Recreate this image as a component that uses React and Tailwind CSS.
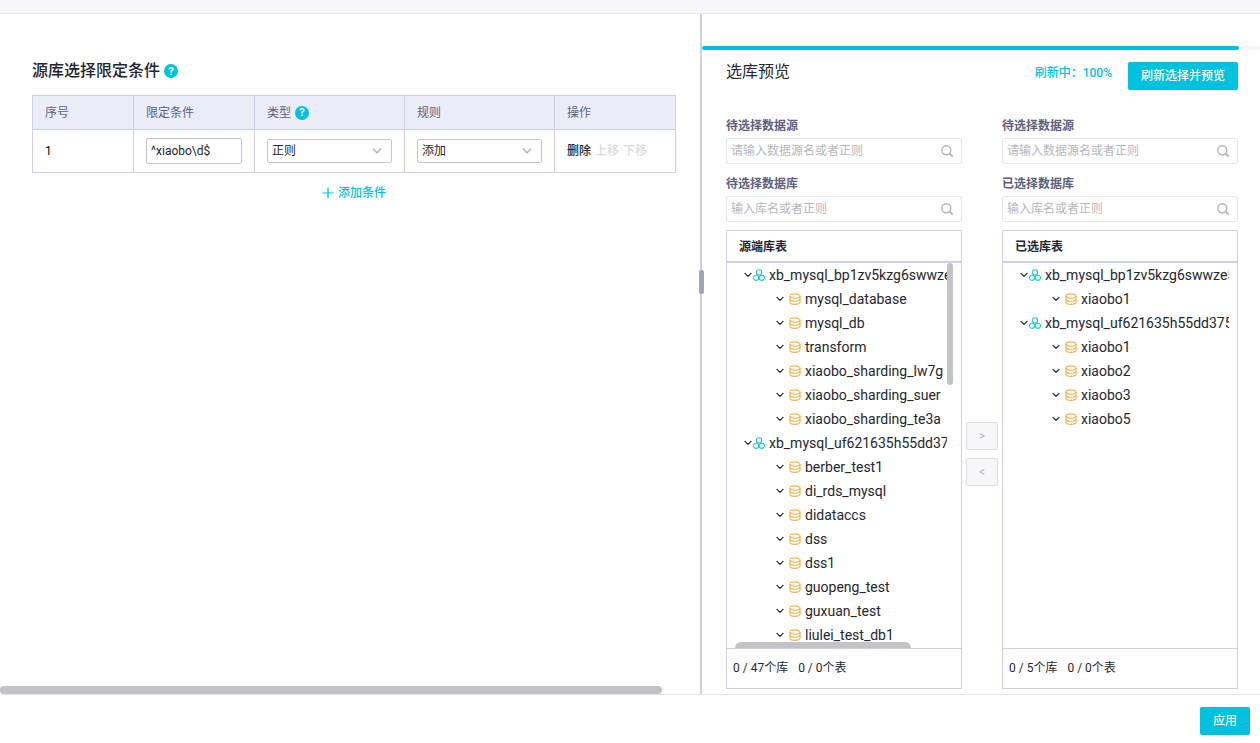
import React from "react";

const sourceTree = [
  {
    name: "xb_mysql_bp1zv5kzg6swwze5",
    children: [
      "mysql_database",
      "mysql_db",
      "transform",
      "xiaobo_sharding_lw7g",
      "xiaobo_sharding_suer",
      "xiaobo_sharding_te3a",
    ],
  },
  {
    name: "xb_mysql_uf621635h55dd3758",
    children: [
      "berber_test1",
      "di_rds_mysql",
      "didataccs",
      "dss",
      "dss1",
      "guopeng_test",
      "guxuan_test",
      "liulei_test_db1",
    ],
  },
];

const selectedTree = [
  { name: "xb_mysql_bp1zv5kzg6swwze5", children: ["xiaobo1"] },
  {
    name: "xb_mysql_uf621635h55dd375",
    children: ["xiaobo1", "xiaobo2", "xiaobo3", "xiaobo5"],
  },
];

function Chevron({ className }) {
  return (
    <svg
      viewBox="0 0 8 8"
      fill="none"
      stroke="currentColor"
      strokeLinecap="round"
      strokeLinejoin="round"
      className={className}
      aria-hidden="true"
    >
      <path d="M1 2.4 L4 5.4 L7 2.4" strokeWidth="1.3" />
    </svg>
  );
}

function HelpButton() {
  return (
    <button
      type="button"
      aria-label="帮助"
      className="flex size-3.5 shrink-0 items-center justify-center rounded-full bg-[#00c1de] text-[11px] leading-none font-bold text-white"
    >
      ?
    </button>
  );
}

function SourceIcon() {
  return (
    <svg viewBox="0 0 12 12" fill="none" stroke="#1fc8e3" strokeWidth="1.1" className="size-3 shrink-0" aria-hidden="true">
      <circle cx="6" cy="3.4" r="2.6" />
      <circle cx="3.1" cy="8.8" r="2.6" />
      <circle cx="8.9" cy="8.8" r="2.6" />
    </svg>
  );
}

function DatabaseIcon() {
  return (
    <svg viewBox="0 0 12 12" fill="none" stroke="#fbb03f" strokeWidth="1.1" className="size-3 shrink-0" aria-hidden="true">
      <ellipse cx="6" cy="3" rx="5" ry="2.1" />
      <path d="M1 3 V9.3 C1 10.5 3.2 11.4 6 11.4 S11 10.5 11 9.3 V3" />
      <path d="M1 6.2 C1 7.3 3.2 8.2 6 8.2 S11 7.3 11 6.2" />
    </svg>
  );
}

function SearchField({ id, label, placeholder }) {
  return (
    <div className="mb-2">
      <label htmlFor={id} className="block h-6 text-xs leading-6 font-bold text-[#5c607c]">
        {label}
      </label>
      <div className="flex h-[26px] items-center rounded-xs border border-[#e6e7eb] bg-white pr-2 pl-1">
        <input
          id={id}
          type="text"
          placeholder={placeholder}
          className="min-w-0 flex-1 bg-transparent text-xs text-[#24262e] outline-none placeholder:text-[#b5b6ba]"
        />
        <button type="button" aria-label="搜索" className="text-[#b3b4b8]">
          <svg viewBox="0 0 12 12" fill="none" stroke="currentColor" strokeWidth="1.4" className="size-3" aria-hidden="true">
            <circle cx="5.3" cy="5.3" r="4.5" />
            <path d="M8.8 8.8 L11.2 11" strokeLinecap="round" strokeWidth="1.8" />
          </svg>
        </button>
      </div>
    </div>
  );
}

function Tree({ nodes }) {
  return (
    <ul className="overflow-hidden text-sm leading-6 whitespace-nowrap text-[#24262e]">
      {nodes.map((node) => (
        <li key={node.name}>
          <div className="flex h-6 items-center pl-[9px]">
            <button type="button" aria-label="展开或收起" className="mr-px shrink-0">
              <Chevron className="size-2" />
            </button>
            <SourceIcon />
            <span className="pl-1">{node.name}</span>
          </div>
          <ul>
            {node.children.map((child) => (
              <li key={child} className="flex h-6 items-center pl-[41px]">
                <button type="button" aria-label="展开或收起" className="mr-[5px] shrink-0">
                  <Chevron className="size-2" />
                </button>
                <DatabaseIcon />
                <span className="pl-1">{child}</span>
              </li>
            ))}
          </ul>
        </li>
      ))}
    </ul>
  );
}

function TreePanel({ title, nodes, databases, tables, scrollbars }) {
  return (
    <section className="flex flex-1 flex-col border border-[#ccd1e6]">
      <h3 className="h-8 border-b-2 border-[#ccd1e6] px-3 text-xs leading-8 font-bold text-[#24262e]">
        {title}
      </h3>
      <div className="relative flex-1 px-2 pb-px">
        <div className={scrollbars ? "pr-1.5" : ""}>
          <Tree nodes={nodes} />
        </div>
        {scrollbars && (
          <>
            <div className="absolute top-0 right-2 h-[122px] w-1.5 rounded-full bg-[#c2c3c7]" />
            <div className="absolute bottom-0 left-2 h-1.5 w-44 rounded-t-md bg-[#c2c3c7]" />
          </>
        )}
      </div>
      <footer className="h-10 border-t border-[#ccd1e6] px-1.5 text-xs leading-[38px] text-[#24262e]">
        <span className="mr-2.5">{databases}</span>
        <span>{tables}</span>
      </footer>
    </section>
  );
}

function SelectBox({ label, options }) {
  return (
    <div className="relative">
      <select
        aria-label={label}
        className="block h-6 w-full appearance-none rounded-xs border border-[#c4c6cc] bg-white px-1 text-xs text-[#24262e] outline-none"
      >
        {options.map((option) => (
          <option key={option}>{option}</option>
        ))}
      </select>
      <Chevron className="pointer-events-none absolute top-[7px] right-2.5 size-2.5 text-[#b3b4b8]" />
    </div>
  );
}

function ConditionPane() {
  const head = "border border-[#ccd1e6] px-3 font-normal";
  const cell = "border border-[#ccd1e6] px-3";
  return (
    <div className="flex min-w-0 flex-[700] flex-col">
      <div className="flex-1 pt-[45px] pr-6 pl-8">
        <div className="flex h-9 items-start gap-1">
          <h2 className="text-base leading-6 font-medium text-[#24262e]">源库选择限定条件</h2>
          <div className="flex h-6 items-center">
            <HelpButton />
          </div>
        </div>
        <table className="w-full table-fixed border-collapse text-left text-xs">
          <colgroup>
            <col className="w-[101px]" />
            <col className="w-[121px]" />
            <col className="w-[150px]" />
            <col className="w-[150px]" />
            <col />
          </colgroup>
          <thead>
            <tr className="h-[34px] bg-[#ebedf6] text-[#5c607c]">
              <th className={head}>序号</th>
              <th className={head}>限定条件</th>
              <th className={head}>
                <div className="flex items-center gap-1">
                  类型
                  <HelpButton />
                </div>
              </th>
              <th className={head}>规则</th>
              <th className={head}>操作</th>
            </tr>
          </thead>
          <tbody>
            <tr className="h-[43px]">
              <td className={cell}>1</td>
              <td className={cell}>
                <input
                  aria-label="限定条件"
                  defaultValue="^xiaobo\d$"
                  className="block h-[26px] w-full rounded-xs border border-[#c4c6cc] px-1 text-xs text-[#24262e] outline-none"
                />
              </td>
              <td className={cell}>
                <SelectBox label="类型" options={["正则"]} />
              </td>
              <td className={cell}>
                <SelectBox label="规则" options={["添加"]} />
              </td>
              <td className={cell}>
                <div className="flex gap-1 font-medium whitespace-nowrap">
                  <button type="button" className="text-[#24262e]">删除</button>
                  <button type="button" disabled className="text-[#dadbde]">上移</button>
                  <button type="button" disabled className="text-[#dadbde]">下移</button>
                </div>
              </td>
            </tr>
          </tbody>
        </table>
        <div className="flex justify-center pt-2.5">
          <button type="button" className="flex items-center gap-1 text-xs leading-5 font-medium text-[#00c1de]">
            <svg viewBox="0 0 12 12" stroke="currentColor" strokeWidth="1.2" className="size-3" aria-hidden="true">
              <path d="M6 0.5 V11.5 M0.5 6 H11.5" />
            </svg>
            添加条件
          </button>
        </div>
      </div>
      <div className="h-2 w-[94.6%] rounded-full bg-[#c2c3c7]" />
    </div>
  );
}

function PreviewPane() {
  return (
    <div className="flex min-w-0 flex-[558] flex-col pt-8">
      <div className="h-1 bg-[#f7f7f9]">
        <div className="h-1 w-[96.3%] rounded-full bg-[#00c1de]" />
      </div>
      <div className="flex flex-1 flex-col pt-3 pr-[22px] pb-[5px] pl-6">
        <div className="flex h-[52px] items-start">
          <h2 className="flex-1 text-base leading-[20px] text-[#24262e]">选库预览</h2>
          <span className="mr-4 text-xs leading-[22px] font-medium text-[#00c1de]">刷新中：100%</span>
          <button type="button" className="h-7 rounded-xs bg-[#00c1de] px-[13px] text-xs font-medium text-white">
            刷新选择并预览
          </button>
        </div>
        <div className="flex flex-1">
          <div className="flex min-w-0 flex-1 flex-col">
            <SearchField id="source-ds" label="待选择数据源" placeholder="请输入数据源名或者正则" />
            <SearchField id="source-db" label="待选择数据库" placeholder="输入库名或者正则" />
            <TreePanel title="源端库表" nodes={sourceTree} databases="0 / 47个库" tables="0 / 0个表" scrollbars />
          </div>
          <div className="flex w-10 flex-col items-center justify-center gap-2 pt-[105px]">
            <button type="button" disabled className="h-7 w-8 rounded-xs border border-[#dcdde0] bg-[#f7f7f9] text-xs text-[#b3b4b8]">
              &gt;
            </button>
            <button type="button" disabled className="h-7 w-8 rounded-xs border border-[#dcdde0] bg-[#f7f7f9] text-xs text-[#b3b4b8]">
              &lt;
            </button>
          </div>
          <div className="flex min-w-0 flex-1 flex-col">
            <SearchField id="target-ds" label="待选择数据源" placeholder="请输入数据源名或者正则" />
            <SearchField id="target-db" label="已选择数据库" placeholder="输入库名或者正则" />
            <TreePanel title="已选库表" nodes={selectedTree} databases="0 / 5个库" tables="0 / 0个表" />
          </div>
        </div>
      </div>
    </div>
  );
}

export default function App() {
  return (
    <div className="flex min-h-screen flex-col bg-white font-['Roboto','Noto_Sans_CJK_SC',sans-serif] text-black">
      <div className="h-3.5 border-b border-[#e6e7eb] bg-[#f7f7fa]" />
      <main className="flex flex-1">
        <ConditionPane />
        <div className="relative w-0.5 bg-[#ccd1e6]">
          <div className="absolute top-64 -left-px h-6 w-[5px] rounded-xs bg-[#9ea4be]" />
        </div>
        <PreviewPane />
      </main>
      <footer className="flex justify-end border-t border-[#e3e4ef] px-2.5 pt-3 pb-2">
        <button type="button" className="h-7 rounded-xs bg-[#00c1de] px-[13px] text-xs font-medium text-white">
          应用
        </button>
      </footer>
    </div>
  );
}
